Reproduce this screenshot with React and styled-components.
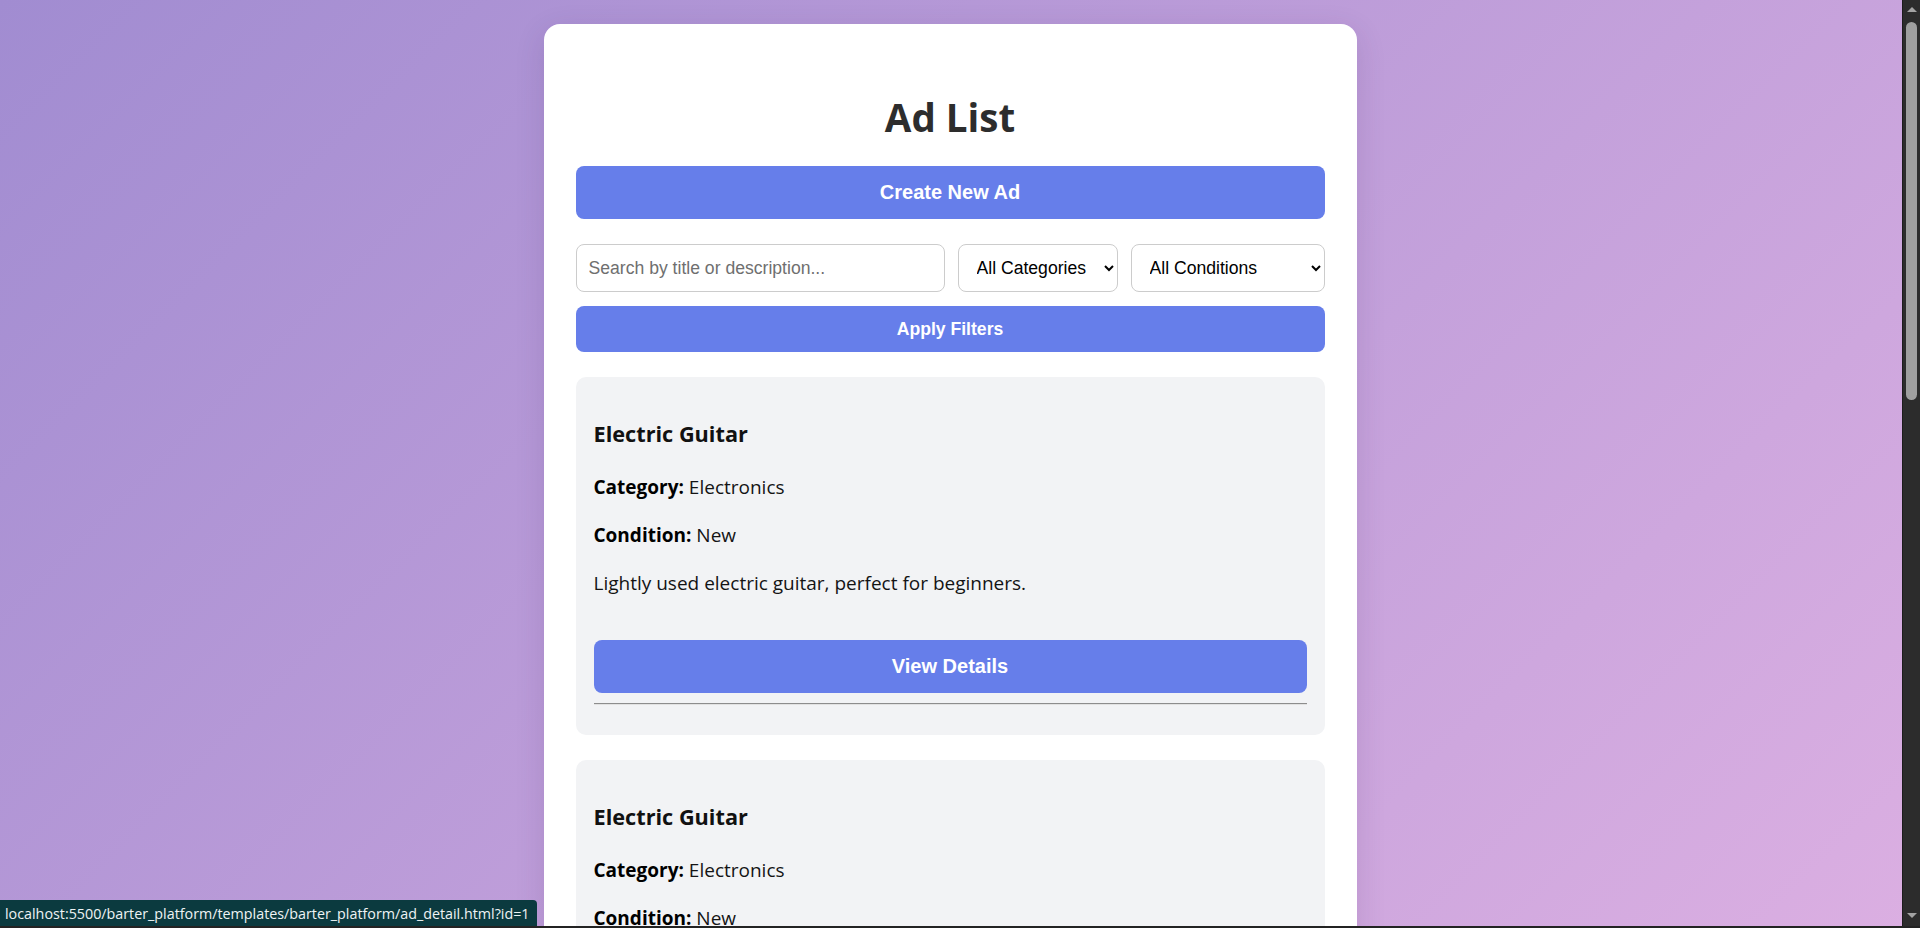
import React from 'react'
import styled, { createGlobalStyle } from 'styled-components'

const GlobalStyle = createGlobalStyle`
  html, body {
    margin: 0;
    height: 100%;
    overflow: hidden;
  }
  body {
    font-family: 'Open Sans', 'DejaVu Sans', sans-serif;
  }
`

const ads = Array.from({ length: 9 }, (_, i) => ({
  id: i + 1,
  title: 'Electric Guitar',
  category: 'Electronics',
  condition: 'New',
  description: 'Lightly used electric guitar, perfect for beginners.'
}))

const Page = styled.div`
  padding: 24px 20px 24px 0;
  background-color: #e2b4e6;
  background-image: linear-gradient(135deg, #a18cd1 0%, #fbc2eb 100%);
  background-size: 100% 2480px;
  background-repeat: no-repeat;
`

const Panel = styled.main`
  width: 813px;
  box-sizing: border-box;
  margin: 0 auto;
  padding: 32px 32px 20px;
  background: #ffffff;
  border-radius: 16px;
  box-shadow: 0 8px 30px rgba(60, 30, 90, 0.14);
`

const Heading = styled.h1`
  margin: 33px 0 21px;
  font-size: 38.5px;
  line-height: 56px;
  font-weight: 700;
  color: #2d2d2d;
  text-align: center;
`

const Button = styled.button`
  display: block;
  width: 100%;
  box-sizing: border-box;
  border: none;
  border-radius: 8px;
  background: #667eea;
  color: #ffffff;
  font-family: 'Liberation Sans', Arial, sans-serif;
  font-weight: 700;
  font-size: ${p => (p.$small ? '17.6px' : '20px')};
  line-height: ${p => (p.$small ? '20px' : '23px')};
  padding: ${p => (p.$small ? '13px' : '15px')} 16px;
  margin-top: ${p => p.$top || 0}px;
  cursor: pointer;
`

const Filters = styled.div`
  display: flex;
  gap: 13px;
  margin-top: 25px;
`

const Field = styled.input`
  flex: 1;
  min-width: 0;
  height: 48px;
  box-sizing: border-box;
  padding: 0 12px;
  border: 1px solid #cccccc;
  border-radius: 8px;
  font-family: 'Liberation Sans', Arial, sans-serif;
  font-size: 17.6px;
  color: #222;
  &::placeholder {
    color: #6f6f6f;
  }
`

const Select = styled.select`
  width: ${p => p.$w}px;
  height: 48px;
  box-sizing: border-box;
  padding: 0 6px 0 14px;
  border: 1px solid #cccccc;
  border-radius: 8px;
  background: #ffffff;
  font-family: 'Liberation Sans', Arial, sans-serif;
  font-size: 17.6px;
  color: #000;
`

const List = styled.div`
  display: flex;
  flex-direction: column;
  gap: 25px;
  margin-top: 25px;
`

const Card = styled.article`
  padding: 20px 18px;
  background: #f2f3f5;
  border-radius: 10px;
`

const Title = styled.h3`
  margin: 22px 0 0;
  font-size: 21.7px;
  line-height: 30px;
  font-weight: 700;
  color: #111;
`

const Line = styled.p`
  margin: ${p => p.$top}px 0 0;
  font-size: 19px;
  line-height: 28px;
  color: #141414;
  b {
    font-weight: 700;
    color: #000;
  }
`

const Rule = styled.hr`
  margin: 10px 0 10px;
  border: none;
  border-top: 1px solid #8d8d8d;
  border-bottom: 1px solid #e2e2e2;
`

const StatusBar = styled.div`
  position: fixed;
  left: 0;
  bottom: 2px;
  height: 26px;
  padding: 0 7px 0 5px;
  display: flex;
  align-items: center;
  background: #0b3a3f;
  color: #eef3f4;
  font-family: 'Open Sans', sans-serif;
  font-size: 14.3px;
  border-top-right-radius: 4px;
`

const WindowEdge = styled.div`
  position: fixed;
  left: 0;
  right: 0;
  bottom: 0;
  height: 2px;
  background: #232323;
`

const ScrollTrack = styled.div`
  position: fixed;
  top: 0;
  right: 0;
  bottom: 0;
  width: 18px;
  box-sizing: border-box;
  border-left: 1px solid #1c1c1c;
  background: #2c2c2c;
  display: flex;
  flex-direction: column;
  align-items: center;
`

const Arrow = styled.span`
  width: 0;
  height: 0;
  margin: ${p => (p.$down ? 'auto 0 10px' : '7px 0 0')};
  border-left: 5px solid transparent;
  border-right: 5px solid transparent;
  ${p => (p.$down ? 'border-top: 5px solid #a3a3a3;' : 'border-bottom: 5px solid #a3a3a3;')}
`

const Thumb = styled.span`
  width: 11px;
  height: 378px;
  margin-top: 10px;
  border-radius: 6px;
  background: #9f9f9f;
`

export default function App () {
  return (
    <>
      <GlobalStyle />
      <Page>
        <Panel>
          <Heading>Ad List</Heading>
          <Button>Create New Ad</Button>
          <Filters>
            <Field placeholder='Search by title or description...' />
            <Select $w={160} defaultValue=''>
              <option value=''>All Categories</option>
              <option>Electronics</option>
              <option>Furniture</option>
              <option>Clothing</option>
            </Select>
            <Select $w={194} defaultValue=''>
              <option value=''>All Conditions</option>
              <option>New</option>
              <option>Used - Like New</option>
              <option>Used - Good</option>
            </Select>
          </Filters>
          <Button $small $top={14}>Apply Filters</Button>
          <List>
            {ads.map(ad => (
              <Card key={ad.id}>
                <Title>{ad.title}</Title>
                <Line $top={24}><b>Category:</b> {ad.category}</Line>
                <Line $top={20}><b>Condition:</b> {ad.condition}</Line>
                <Line $top={20}>{ad.description}</Line>
                <Button $top={43}>View Details</Button>
                <Rule />
              </Card>
            ))}
          </List>
        </Panel>
      </Page>
      <ScrollTrack>
        <Arrow />
        <Thumb />
        <Arrow $down />
      </ScrollTrack>
      <StatusBar>localhost:5500/barter_platform/templates/barter_platform/ad_detail.html?id=1</StatusBar>
      <WindowEdge />
    </>
  )
}
